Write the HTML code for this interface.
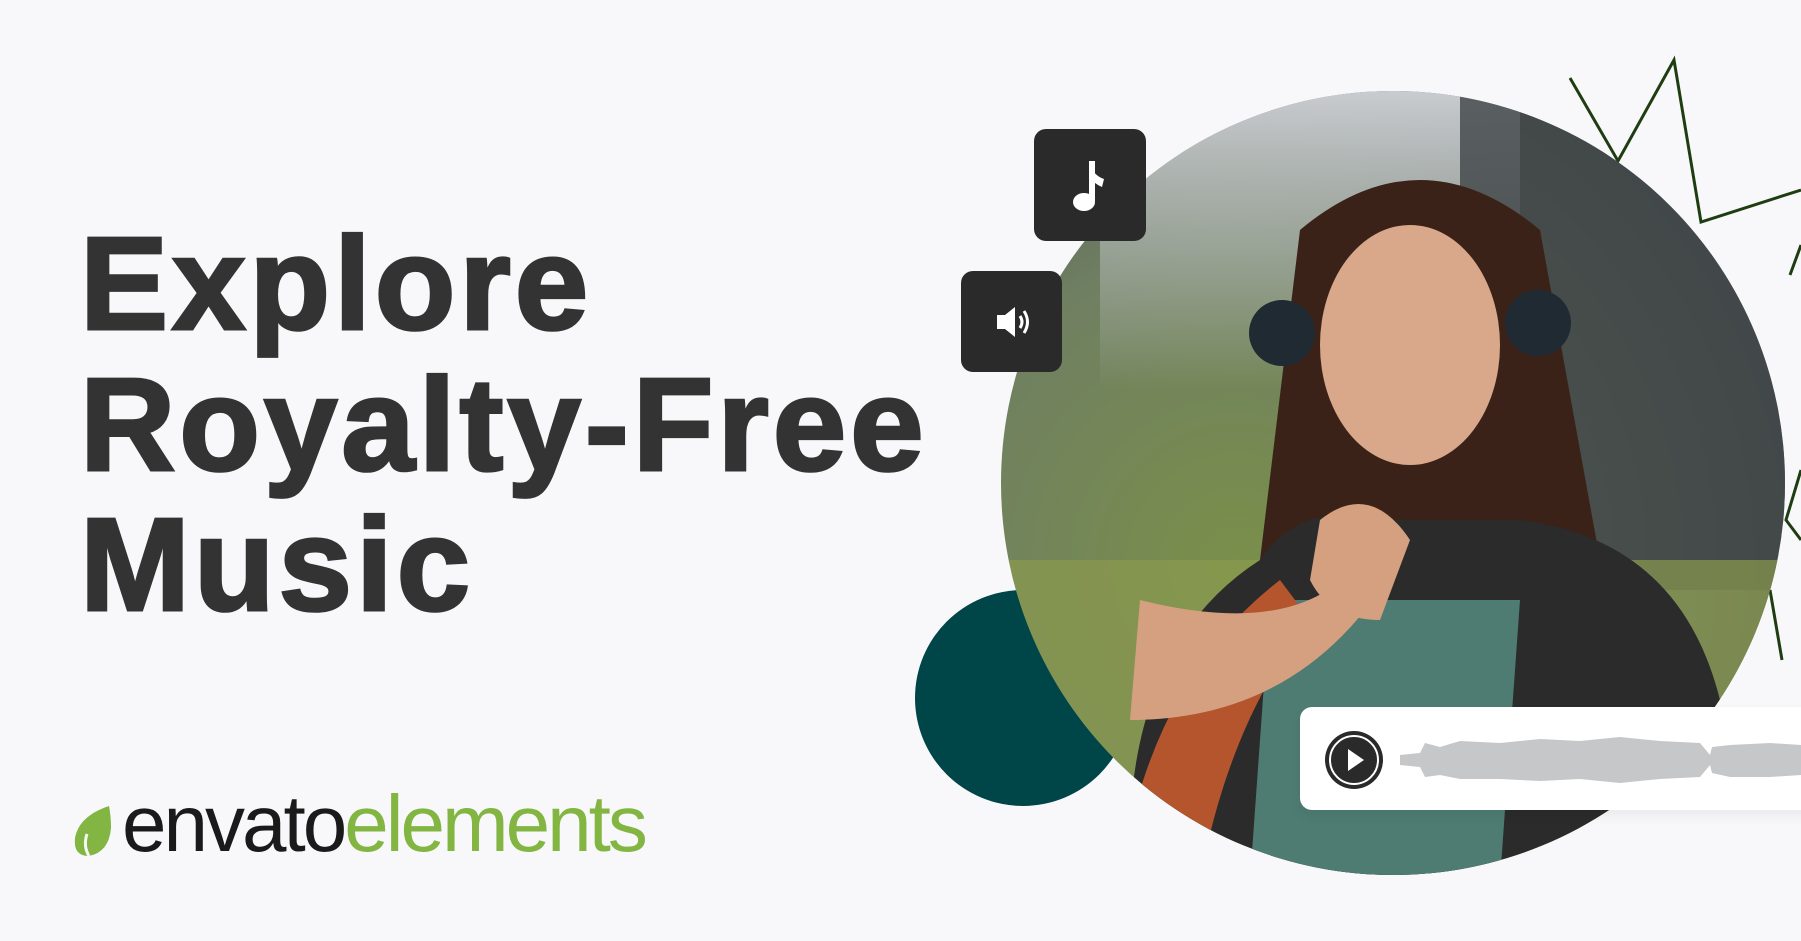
<!DOCTYPE html>
<html><head><meta charset="utf-8"><style>
html,body{margin:0;padding:0}
body{width:1801px;height:941px;background:#f8f8fa;position:relative;overflow:hidden;font-family:"Liberation Sans",Arial,sans-serif}
.h{position:absolute;left:80px;font-weight:700;font-size:132px;color:#333333;letter-spacing:4px;line-height:1;white-space:nowrap;-webkit-text-stroke:3px #333333}
.box{position:absolute;background:#2a2a2a;border-radius:12px}
</style></head><body>
<div class="h" style="top:218px">Explore</div>
<div class="h" style="top:359px">Royalty-Free</div>
<div class="h" style="top:499px">Music</div>

<svg style="position:absolute;left:0;top:0" width="1801" height="941">
  <defs>
    <clipPath id="c"><circle cx="1393" cy="483" r="392"/></clipPath>
    <radialGradient id="bg" cx="0.3" cy="0.6" r="0.8">
      <stop offset="0" stop-color="#7a8f4a"/><stop offset="0.5" stop-color="#6f7f62"/><stop offset="1" stop-color="#4a5250"/>
    </radialGradient>
    <linearGradient id="top" x1="0" y1="0" x2="0" y2="1">
      <stop offset="0" stop-color="#c9ccd0"/><stop offset="1" stop-color="#c9ccd0" stop-opacity="0"/>
    </linearGradient>
  </defs>
  <polyline points="1570,78 1618,161 1674,60 1701,222 1801,190" fill="none" stroke="#1f3d12" stroke-width="3"/>
  <polyline points="1801,245 1790,275" fill="none" stroke="#1f3d12" stroke-width="3"/>
  <polyline points="1801,470 1786,520 1801,540" fill="none" stroke="#1f3d12" stroke-width="3"/>
  <polyline points="1770,590 1782,660" fill="none" stroke="#1f3d12" stroke-width="3"/>
  <circle cx="1023" cy="698" r="108" fill="#004548"/>
  <g clip-path="url(#c)">
    <rect x="1000" y="90" width="790" height="790" fill="url(#bg)"/>
    <rect x="1100" y="90" width="420" height="300" fill="url(#top)"/>
    <rect x="1460" y="90" width="330" height="500" fill="#3e4446" opacity="0.8"/>
    <rect x="1000" y="560" width="790" height="320" fill="#8a9a4e" opacity="0.7"/>
    <path d="M1300,230 Q1420,130 1540,230 L1600,560 L1260,560 Z" fill="#3a2218"/>
    <ellipse cx="1410" cy="345" rx="90" ry="120" fill="#d9a88a"/>
    <path d="M1260,560 Q1300,500 1380,520 L1520,520 Q1680,540 1720,700 L1760,880 L1130,880 Q1120,650 1260,560 Z" fill="#2b2b2b"/>
    <path d="M1270,600 L1520,600 L1500,880 L1250,880 Z" fill="#4e7c72"/>
    <path d="M1120,880 Q1150,680 1280,580 L1310,620 Q1230,720 1200,880 Z" fill="#b4552e"/>
    <path d="M1320,520 Q1370,480 1410,540 L1380,620 Q1330,620 1310,580 Z" fill="#d4a07f"/>
    <path d="M1140,600 Q1300,640 1360,560 L1380,590 Q1290,720 1130,720 Z" fill="#d4a07f"/>
    <circle cx="1282" cy="333" r="33" fill="#1f2a33"/>
    <circle cx="1538" cy="323" r="33" fill="#1f2a33"/>
  </g>
</svg>

<div class="box" style="left:1034px;top:129px;width:112px;height:112px">
  <svg width="112" height="112"><path d="M58 32 L58 72" stroke="#fff" stroke-width="6"/><ellipse cx="50" cy="73" rx="11" ry="9" fill="#fff"/><path d="M55 32 Q58 46 70 50 L68 58 Q61 55 57 50 Z" fill="#fff"/></svg>
</div>
<div class="box" style="left:961px;top:271px;width:101px;height:101px">
  <svg width="101" height="101"><path d="M36 44 L44 44 L54 36 L54 66 L44 58 L36 58 Z" fill="#fff"/><path d="M59 45 Q63 51 59 57" stroke="#fff" stroke-width="3" fill="none"/><path d="M63 40 Q70 51 63 62" stroke="#fff" stroke-width="3" fill="none"/></svg>
</div>

<div style="position:absolute;left:1300px;top:707px;width:520px;height:103px;background:#fff;border-radius:12px;box-shadow:0 6px 12px rgba(0,0,0,0.06)">
  <svg width="520" height="103" style="position:absolute;left:0;top:0">
    <circle cx="54" cy="53" r="29" fill="#2a2a2a"/><circle cx="54" cy="53" r="24" fill="none" stroke="#fff" stroke-width="2"/>
    <path d="M48 42 L64 53 L48 64 Z" fill="#fff"/>
    <path d="M100 48 L120 46 L125 36 L140 40 L160 34 L200 36 L240 32 L280 34 L320 30 L360 34 L400 36 L410 48 L412 40 L430 38 L470 36 L501 38 L501 68 L470 70 L430 70 L412 66 L410 58 L400 70 L360 72 L320 76 L280 72 L240 74 L200 72 L160 72 L140 68 L125 70 L120 60 L100 58 Z" fill="#c6c7c8"/>
  </svg>
</div>

<svg style="position:absolute;left:71px;top:804px" width="46" height="54"><path d="M38 2 Q8 12 4 34 Q2 52 18 52 Q38 48 40 24 Q40 12 38 2 Z" fill="#82b541"/><path d="M16 30 Q12 42 18 52" stroke="#f8f8fa" stroke-width="3" fill="none"/></svg>
<div style="position:absolute;left:122px;top:784px;font-size:80px;letter-spacing:-3px;white-space:nowrap;line-height:1"><span style="color:#1a1a1a">envato</span><span style="color:#82b541">elements</span></div>
</body></html>
